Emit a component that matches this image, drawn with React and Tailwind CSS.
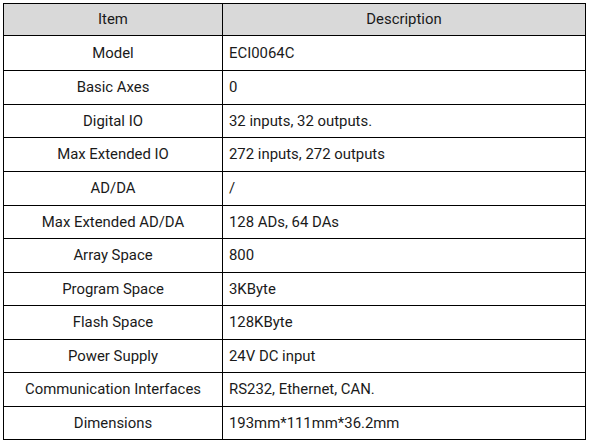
import React from "react";

const rows = [
    ["Model", "ECI0064C", "h-[35px]"],
    ["Basic Axes", "0", "h-[34px]"],
    ["Digital IO", "32 inputs, 32 outputs.", "h-[33px]"],
    ["Max Extended IO", "272 inputs, 272 outputs", "h-[34px]"],
    ["AD/DA", "/", "h-[34px]"],
    ["Max Extended AD/DA", "128 ADs, 64 DAs", "h-[33px]"],
    ["Array Space", "800", "h-[34px]"],
    ["Program Space", "3KByte", "h-[33px]"],
    ["Flash Space", "128KByte", "h-[34px]"],
    ["Power Supply", "24V DC input", "h-[33px]"],
    ["Communication Interfaces", "RS232, Ethernet, CAN.", "h-[34px]"],
    ["Dimensions", "193mm*111mm*36.2mm", "h-[33px]"],
];

const App = () => {
    return (
        <div className="w-[590px] h-[445px] bg-white pt-[3px] pl-[3px] font-['Roboto',sans-serif] text-[14.9px] text-[#1a1a1a]">
            <div className="w-[583px] border-t border-l border-black">
                {/* Header */}
                <div className="flex h-[32px] bg-[#d9d9d9]">
                    <div className="w-[219px] flex items-center justify-center border-r border-b border-black">Item</div>
                    <div className="flex-1 flex items-center justify-center border-r border-b border-black">Description</div>
                </div>

                {/* Rows */}
                {rows.map(([item, desc, h]) => (
                    <div key={item} className={`flex ${h}`}>
                        <div className="w-[219px] flex items-center justify-center border-r border-b border-black">{item}</div>
                        <div className="flex-1 flex items-center pl-[6px] border-r border-b border-black">{desc}</div>
                    </div>
                ))}
            </div>
        </div>
    );
};

export default App;
